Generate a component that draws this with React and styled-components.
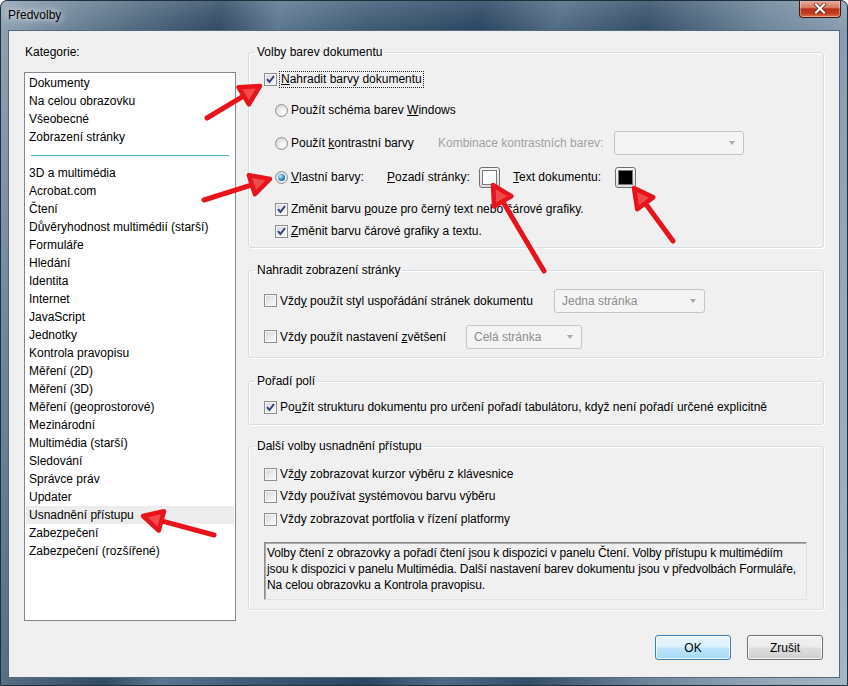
import React from "react";
import styled, { createGlobalStyle } from "styled-components";

const GlobalStyle = createGlobalStyle`
  html, body {
    margin: 0;
    padding: 0;
    background: #fff;
  }
  body {
    font-family: "Liberation Sans", Arial, sans-serif;
    font-size: 12px;
    color: #000;
  }
`;

const categoriesTop = ["Dokumenty", "Na celou obrazovku", "Všeobecné", "Zobrazení stránky"];
const categories = [
  "3D a multimédia",
  "Acrobat.com",
  "Čtení",
  "Důvěryhodnost multimédií (starší)",
  "Formuláře",
  "Hledání",
  "Identita",
  "Internet",
  "JavaScript",
  "Jednotky",
  "Kontrola pravopisu",
  "Měření (2D)",
  "Měření (3D)",
  "Měření (geoprostorové)",
  "Mezinárodní",
  "Multimédia (starší)",
  "Sledování",
  "Správce práv",
  "Updater",
  "Usnadnění přístupu",
  "Zabezpečení",
  "Zabezpečení (rozšířené)",
];

const arrows = [
  { from: [206, 117], to: [259, 85] },
  { from: [203, 199], to: [269, 178] },
  { from: [543, 270], to: [492, 184] },
  { from: [672, 240], to: [633, 187] },
  { from: [213, 534], to: [142, 515] },
];

function arrowShape({ from, to }) {
  const dx = to[0] - from[0];
  const dy = to[1] - from[1];
  const len = Math.hypot(dx, dy);
  const ux = dx / len;
  const uy = dy / len;
  const bx = to[0] - ux * 19;
  const by = to[1] - uy * 19;
  const px = -uy * 10;
  const py = ux * 10;
  return {
    shaft: [from[0], from[1], bx, by],
    head: `${to[0]},${to[1]} ${bx + px},${by + py} ${bx - px},${by - py}`,
  };
}

function Arrows() {
  return (
    <ArrowLayer viewBox="0 0 848 686">
      {arrows.map((a, i) => {
        const s = arrowShape(a);
        return (
          <g key={i}>
            <line
              x1={s.shaft[0]}
              y1={s.shaft[1]}
              x2={s.shaft[2]}
              y2={s.shaft[3]}
              stroke="#e8141c"
              strokeWidth="5"
              strokeLinecap="round"
            />
            <polygon
              points={s.head}
              fill="#f04a4a"
              stroke="#e8141c"
              strokeWidth="4.5"
              strokeLinejoin="round"
            />
          </g>
        );
      })}
    </ArrowLayer>
  );
}

function Check({ checked }) {
  return (
    <CheckBox>
      {checked && (
        <svg width="11" height="11" viewBox="0 0 11 11">
          <path d="M2 5.2 L4.4 8 L9 2.2" fill="none" stroke="#34427c" strokeWidth="2" />
        </svg>
      )}
    </CheckBox>
  );
}

function Option({ checked, children }) {
  return (
    <OptionLine>
      <Check checked={checked} />
      <span>{children}</span>
    </OptionLine>
  );
}

function Radio({ checked, children }) {
  return (
    <OptionLine>
      <RadioDot $on={checked} />
      <span>{children}</span>
    </OptionLine>
  );
}

function Combo({ width, value }) {
  return (
    <ComboBox $w={width}>
      <span>{value}</span>
      <ComboArrow />
    </ComboBox>
  );
}

export default function App() {
  return (
    <>
      <GlobalStyle />
      <Window>
        <TitleBar>
          <Title>Předvolby</Title>
          <CloseButton>
            <svg width="14" height="11" viewBox="0 0 14 11">
              <path d="M3 1.5 L11 9.5 M11 1.5 L3 9.5" stroke="#5a1b10" strokeWidth="3.6" strokeLinecap="square" />
              <path d="M3 1.5 L11 9.5 M11 1.5 L3 9.5" stroke="#fff" strokeWidth="2.2" strokeLinecap="square" />
            </svg>
          </CloseButton>
        </TitleBar>
        <Frame>
          <Client>
            <Main>
              <LeftCol>
                <FieldLabel>Kategorie:</FieldLabel>
                <ListBox>
                  {categoriesTop.map((c) => (
                    <ListItem key={c}>{c}</ListItem>
                  ))}
                  <ListSeparator />
                  {categories.map((c) => (
                    <ListItem key={c} $selected={c === "Usnadnění přístupu"}>
                      {c}
                    </ListItem>
                  ))}
                </ListBox>
              </LeftCol>

              <RightCol>
                <Group $pb={7}>
                  <Legend>Volby barev dokumentu</Legend>
                  <Row $mt={10} $h={18}>
                    <Check checked />
                    <FocusLabel>
                      <u>N</u>ahradit barvy dokumentu
                    </FocusLabel>
                  </Row>
                  <Row $mt={13} $h={18} $indent={11}>
                    <Radio>
                      Použít schéma barev <u>W</u>indows
                    </Radio>
                  </Row>
                  <Row $mt={12} $h={24} $indent={11}>
                    <Cell $w={163}>
                      <Radio>
                        Použít <u>k</u>ontrastní barvy
                      </Radio>
                    </Cell>
                    <Cell $w={176} $muted>
                      Kombinace kontrastních barev:
                    </Cell>
                    <Combo width={130} value="" />
                  </Row>
                  <Row $mt={11} $h={22} $indent={11}>
                    <Cell $w={112}>
                      <Radio checked>
                        <u>V</u>lastní barvy:
                      </Radio>
                    </Cell>
                    <Cell $w={92}>
                      <span>
                        <u>P</u>ozadí stránky:
                      </span>
                    </Cell>
                    <Swatch $color="#fff" />
                    <Cell $w={102} $ml={13}>
                      <span>
                        <u>T</u>ext dokumentu:
                      </span>
                    </Cell>
                    <Swatch $color="#000" />
                  </Row>
                  <Row $mt={12} $h={18} $indent={11}>
                    <Option checked>
                      Změnit barvu <u>p</u>ouze pro černý text nebo čárové grafiky.
                    </Option>
                  </Row>
                  <Row $mt={4} $h={18} $indent={11}>
                    <Option checked>
                      <u>Z</u>měnit barvu čárové grafiky a textu.
                    </Option>
                  </Row>
                </Group>

                <Group $mt={14} $pb={9}>
                  <Legend>Nahradit zobrazení stránky</Legend>
                  <Row $mt={11} $h={23}>
                    <Cell $w={290}>
                      <Option>
                        Vžd<u>y</u> použít styl uspořádání stránek dokumentu
                      </Option>
                    </Cell>
                    <Combo width={151} value="Jedna stránka" />
                  </Row>
                  <Row $mt={13} $h={23}>
                    <Cell $w={202}>
                      <Option>
                        Vždy použít nastavení <u>z</u>většení
                      </Option>
                    </Cell>
                    <Combo width={116} value="Celá stránka" />
                  </Row>
                </Group>

                <Group $mt={15} $pb={8}>
                  <Legend>Pořadí polí</Legend>
                  <Row $mt={9} $h={18}>
                    <Option checked>
                      Po<u>u</u>žít strukturu dokumentu pro určení pořadí tabulátoru, když není pořadí určené explicitně
                    </Option>
                  </Row>
                </Group>

                <Group $mt={13} $pb={9}>
                  <Legend>Další volby usnadnění přístupu</Legend>
                  <Row $mt={11} $h={18}>
                    <Option>
                      Vž<u>d</u>y zobrazovat kurzor výběru z klávesnice
                    </Option>
                  </Row>
                  <Row $mt={4} $h={18}>
                    <Option>
                      Vždy používat <u>s</u>ystémovou barvu výběru
                    </Option>
                  </Row>
                  <Row $mt={5} $h={18}>
                    <Option>Vždy zobrazovat portfolia v řízení platformy</Option>
                  </Row>
                  <InfoBox>
                    Volby čtení z obrazovky a pořadí čtení jsou k dispozici v panelu Čtení. Volby přístupu k multimédiím
                    <br />
                    jsou k dispozici v panelu Multimédia. Další nastavení barev dokumentu jsou v předvolbách Formuláře,
                    <br />
                    Na celou obrazovku a Kontrola pravopisu.
                  </InfoBox>
                </Group>
              </RightCol>
            </Main>

            <Footer>
              <DialogButton $primary>OK</DialogButton>
              <DialogButton>Zrušit</DialogButton>
            </Footer>
          </Client>
        </Frame>
        <Arrows />
      </Window>
    </>
  );
}

const Window = styled.div`
  position: relative;
  width: 848px;
  height: 686px;
  display: flex;
  flex-direction: column;
  box-sizing: border-box;
  border-radius: 7px 7px 0 0;
  overflow: hidden;
  border: 1px solid #1f2f3d;
  background:
    linear-gradient(to bottom, rgba(255, 255, 255, 0.14), rgba(255, 255, 255, 0) 30px),
    linear-gradient(
      100deg,
      #90a4b5 0%,
      #6e8599 7%,
      #4e677e 15%,
      #304b64 23%,
      #5c7791 29%,
      #3f5b75 38%,
      #2a4560 50%,
      #506b85 58%,
      #334e68 67%,
      #6c8499 79%,
      #92a6b7 91%,
      #a5b6c4 100%
    );
`;

const TitleBar = styled.div`
  height: 29px;
  display: flex;
  justify-content: space-between;
  align-items: flex-start;
  padding: 0 6px 0 7px;
`;

const Title = styled.div`
  line-height: 28px;
  font-size: 12px;
  color: #000;
  text-shadow: 0 0 6px rgba(255, 255, 255, 0.9), 0 0 10px rgba(255, 255, 255, 0.7);
`;

const CloseButton = styled.div`
  width: 42px;
  height: 18px;
  box-sizing: border-box;
  margin-top: -1px;
  display: flex;
  align-items: center;
  justify-content: center;
  border: 1px solid #3b1a14;
  border-top: none;
  border-radius: 0 0 4px 4px;
  background: linear-gradient(to bottom, #eab2a3 0%, #d67a63 45%, #b8301a 52%, #c53d20 80%, #e47a54 100%);
  box-shadow: inset 0 0 0 1px rgba(255, 255, 255, 0.35);
`;

const Frame = styled.div`
  flex: 1;
  display: flex;
  padding: 0 7px 7px 7px;
`;

const Client = styled.div`
  flex: 1;
  display: flex;
  flex-direction: column;
  background: #f0f0f0;
  border: 1px solid #56697c;
`;

const Main = styled.div`
  display: flex;
  align-items: flex-start;
  gap: 12px;
  padding: 13px 15px 0 15px;
`;

const LeftCol = styled.div`
  width: 212px;
  display: flex;
  flex-direction: column;
`;

const FieldLabel = styled.div`
  line-height: 16px;
  margin-bottom: 12px;
  padding-left: 1px;
`;

const ListBox = styled.div`
  height: 549px;
  box-sizing: border-box;
  border: 1px solid #828790;
  background: #fff;
  padding: 1px 1px 0;
`;

const ListItem = styled.div`
  height: 18px;
  line-height: 18px;
  padding-left: 3px;
  white-space: nowrap;
  background: ${({ $selected }) => ($selected ? "#ececec" : "transparent")};
`;

const ListSeparator = styled.div`
  height: 18px;
  display: flex;
  align-items: center;
  padding: 0 5px;
  &::after {
    content: "";
    flex: 1;
    height: 1px;
    background: #5aaabb;
  }
`;

const RightCol = styled.div`
  width: 576px;
  display: flex;
  flex-direction: column;
`;

const Group = styled.fieldset`
  margin: ${({ $mt }) => $mt || 0}px 0 0 0;
  padding: 0 16px ${({ $pb }) => $pb}px 15px;
  min-width: 0;
  border: 1px solid #d5dfe5;
  border-radius: 3px;
  box-shadow: inset 1px 1px 0 #fff, 1px 1px 0 #fff;
`;

const Legend = styled.legend`
  padding: 0 2px;
  margin-left: -9px;
  line-height: 16px;
  font-size: 12px;
`;

const Row = styled.div`
  display: flex;
  align-items: center;
  height: ${({ $h }) => $h}px;
  margin-top: ${({ $mt }) => $mt}px;
  margin-left: ${({ $indent }) => $indent || 0}px;
  white-space: nowrap;
`;

const Cell = styled.div`
  width: ${({ $w }) => $w}px;
  margin-left: ${({ $ml }) => $ml || 0}px;
  flex-shrink: 0;
  display: flex;
  align-items: center;
  color: ${({ $muted }) => ($muted ? "#a2a2a2" : "#000")};
`;

const OptionLine = styled.label`
  display: flex;
  align-items: center;
  gap: 3px;
  line-height: 16px;
`;

const CheckBox = styled.span`
  width: 13px;
  height: 13px;
  box-sizing: border-box;
  flex-shrink: 0;
  display: inline-flex;
  align-items: center;
  justify-content: center;
  border: 1px solid #8e8f8f;
  background: linear-gradient(135deg, #d2d5da 0%, #eceef0 60%, #fbfbfb 100%);
  box-shadow: inset 0 0 0 1px #f6f6f6;
`;

const RadioDot = styled.span`
  width: 13px;
  height: 13px;
  box-sizing: border-box;
  flex-shrink: 0;
  border-radius: 50%;
  border: 1px solid #8e8f8f;
  display: inline-flex;
  align-items: center;
  justify-content: center;
  background: radial-gradient(circle at 65% 65%, #fdfdfd 0%, #e4e5e7 55%, #c9cbcf 100%);
  &::after {
    content: "";
    display: ${({ $on }) => ($on ? "block" : "none")};
    width: 7px;
    height: 7px;
    border-radius: 50%;
    background: radial-gradient(circle at 35% 35%, #c3ecfd 0%, #45a6dd 40%, #125a92 80%, #0b3d69 100%);
  }
`;

const FocusLabel = styled.span`
  margin-left: 3px;
  line-height: 15px;
  padding: 0 1px;
  outline: 1px dotted #222;
`;

const ComboBox = styled.div`
  width: ${({ $w }) => $w}px;
  height: 24px;
  box-sizing: border-box;
  flex-shrink: 0;
  display: flex;
  align-items: center;
  justify-content: space-between;
  padding: 0 8px 0 7px;
  border: 1px solid #c5c5c5;
  border-radius: 3px;
  background: #f4f4f4;
  color: #8d8d8d;
`;

const ComboArrow = styled.span`
  width: 0;
  height: 0;
  border-left: 3.5px solid transparent;
  border-right: 3.5px solid transparent;
  border-top: 4px solid #a8a8a8;
`;

const Swatch = styled.span`
  width: 21px;
  height: 21px;
  box-sizing: border-box;
  flex-shrink: 0;
  padding: 2px;
  border: 1px solid #707070;
  border-radius: 3px;
  background: linear-gradient(to bottom, #f6f6f6, #dedede);
  &::after {
    content: "";
    display: block;
    width: 100%;
    height: 100%;
    box-sizing: border-box;
    border: 1px solid #7a7a7a;
    background: ${({ $color }) => $color};
  }
`;

const InfoBox = styled.div`
  margin-top: 14px;
  height: 58px;
  box-sizing: border-box;
  padding: 2px 2px;
  line-height: 16px;
  letter-spacing: -0.12px;
  white-space: nowrap;
  overflow: hidden;
  border-style: solid;
  border-width: 1px;
  border-color: #8c8c8c #e2e2e2 #e2e2e2 #8c8c8c;
  box-shadow: inset 1px 1px 0 #a9a9a9;
`;

const Footer = styled.div`
  display: flex;
  justify-content: flex-end;
  gap: 16px;
  margin-top: 14px;
  padding-right: 16px;
`;

const DialogButton = styled.button`
  width: 76px;
  height: 25px;
  font-family: "Liberation Sans", Arial, sans-serif;
  font-size: 12px;
  color: #000;
  border-radius: 3px;
  border: 1px solid ${({ $primary }) => ($primary ? "#3c7fb1" : "#707070")};
  background: ${({ $primary }) =>
    $primary
      ? "linear-gradient(to bottom, #eaf6fd 0%, #d9f0fc 48%, #bee6fd 52%, #a7d9f5 100%)"
      : "linear-gradient(to bottom, #f2f2f2 0%, #ebebeb 48%, #dddddd 52%, #cfcfcf 100%)"};
  box-shadow: inset 0 0 0 1px rgba(255, 255, 255, 0.75);
  padding: 0;
`;

const ArrowLayer = styled.svg`
  position: absolute;
  top: 0;
  left: 0;
  width: 848px;
  height: 686px;
  pointer-events: none;
`;
